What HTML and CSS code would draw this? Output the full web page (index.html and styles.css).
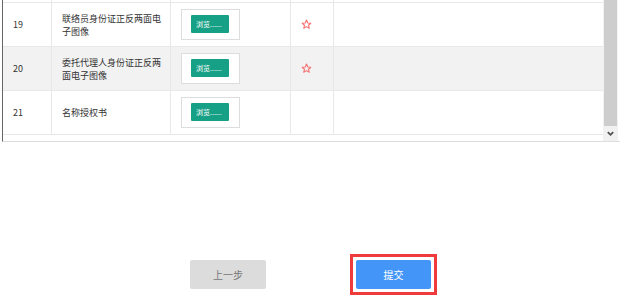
FILE: index.html
```html
<!DOCTYPE html>
<html>
<head>
<meta charset="utf-8" />
<title>上传材料</title>
<link rel="stylesheet" href="styles.css">
</head>
<body>
<div class="panel">
    <div class="grid">
        <div class="row stub">
            <div class="c1"></div><div class="c2"></div><div class="c3"></div><div class="c4"></div><div class="c5"></div>
        </div>
        <div class="row">
            <div class="c1">19</div>
            <div class="c2">联络员身份证正反两面电子图像</div>
            <div class="c3"><span class="upload"><span class="btn-browse">浏览......</span></span></div>
            <div class="c4"><svg class="star" viewBox="0 0 12 12"><path d="M6 1.2 7.4 4.3 10.7 4.6 8.2 6.8 9 10.1 6 8.3 3 10.1 3.8 6.8 1.3 4.6 4.6 4.3Z"/></svg></div>
            <div class="c5"></div>
        </div>
        <div class="row alt">
            <div class="c1">20</div>
            <div class="c2">委托代理人身份证正反两面电子图像</div>
            <div class="c3"><span class="upload"><span class="btn-browse">浏览......</span></span></div>
            <div class="c4"><svg class="star" viewBox="0 0 12 12"><path d="M6 1.2 7.4 4.3 10.7 4.6 8.2 6.8 9 10.1 6 8.3 3 10.1 3.8 6.8 1.3 4.6 4.6 4.3Z"/></svg></div>
            <div class="c5"></div>
        </div>
        <div class="row">
            <div class="c1">21</div>
            <div class="c2">名称授权书</div>
            <div class="c3"><span class="upload"><span class="btn-browse">浏览......</span></span></div>
            <div class="c4"></div>
            <div class="c5"></div>
        </div>
    </div>
    <div class="scrollbar">
        <div class="thumb"></div>
        <div class="arrow"><svg viewBox="0 0 10 10"><path d="M2 3.5 5 6.5 8 3.5" /></svg></div>
    </div>
</div>
<div class="actions">
    <a class="btn btn-prev">上一步</a>
    <span class="mark"><a class="btn btn-submit">提交</a></span>
</div>
</body>
</html>
```
FILE: styles.css
```css
*{ margin:0; padding:0; box-sizing:border-box;}
html,body{ height:100%;}
body{ min-height:301px; font-family:"Microsoft YaHei","Noto Sans CJK SC",sans-serif; font-size:9px; color:#333; background:#fff;}
.panel{ display:flex; width:618px; height:142px; margin-left:2px; border-left:1px solid #666; border-bottom:1px solid #ddd;}
.grid{ flex:1; overflow:hidden;}
.row{ display:flex; height:44px; border-bottom:1px solid #e8e8e8; background:#fff;}
.row.stub{ height:3px;}
.row.alt{ background:#f2f2f2;}
.row > div{ display:flex; align-items:center; border-right:1px solid #e8e8e8; line-height:13px;}
.c1{ width:49px; padding-left:10px;}
.c2{ width:119px; padding:0 8px 0 10px;}
.c3{ width:120px; padding-left:10px;}
.c4{ width:43px; padding-left:10px;}
.c5{ flex:1;}
.row > .c5{ border-right:none;}
.upload{ display:block; padding:5px 10px 6px 9px; border:1px solid #ddd; background:#fff;}
.btn-browse{ display:block; width:38px; height:18px; line-height:18px; padding-left:5px; background:#16a085; color:#fff; font-size:7px; border-radius:1px; white-space:nowrap; overflow:hidden;}
.star{ width:11px; height:11px; fill:none; stroke:#f57272; stroke-width:1.2; stroke-linejoin:round;}
.scrollbar{ width:15px; display:flex; flex-direction:column; background:#f1f1f1; margin-right:2px;}
.thumb{ flex:1; background:#cdcdcd; margin:0 1px;}
.arrow{ height:15px; display:flex; align-items:center; justify-content:center;}
.arrow svg{ width:9px; height:9px; fill:none; stroke:#505050; stroke-width:2;}
.actions{ display:flex; align-items:center; justify-content:center; gap:84px; margin-top:112px; padding-left:3px;}
.btn{ display:block; width:76px; height:29px; line-height:29px; text-align:center; border-radius:2px; font-size:10px; cursor:pointer;}
.btn-prev{ background:#dcdcdc; color:#777;}
.mark{ display:block; padding:3px; border:3px solid #ef3b3b;}
.btn-submit{ width:75px; background:#4396f8; color:#fff;}
```
